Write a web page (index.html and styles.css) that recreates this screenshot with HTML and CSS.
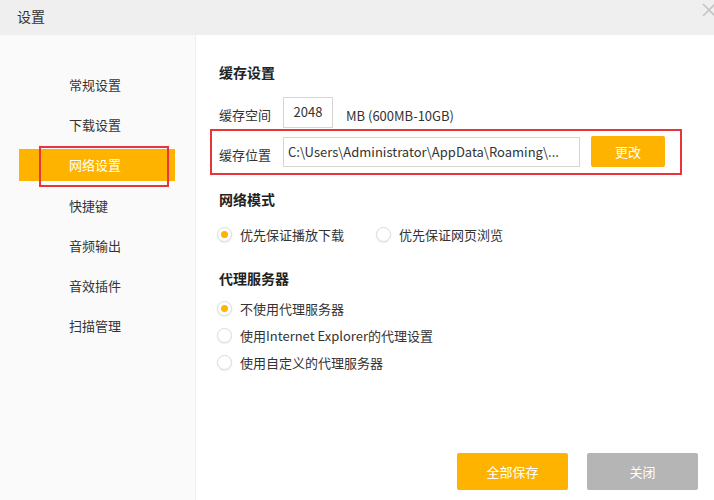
FILE: index.html
```html
<!DOCTYPE html>
<html lang="zh-CN">
<head>
    <meta charset="UTF-8">
    <title>设置</title>
    <link rel="stylesheet" href="styles.css">
</head>
<body>
    <div class="window">
        <div class="titlebar">
            <span class="title">设置</span>
            <svg class="close" width="14" height="14" viewBox="0 0 14 14">
                <path d="M1 1 L13 13 M13 1 L1 13" stroke="#c4c4c4" stroke-width="1.6" fill="none"/>
            </svg>
        </div>

        <div class="main">
            <div class="sidebar">
                <div class="nav-item"><span class="nav-label">常规设置</span></div>
                <div class="nav-item"><span class="nav-label">下载设置</span></div>
                <div class="nav-item active">
                    <span class="nav-label">网络设置</span>
                    <span class="mark mark-nav"></span>
                </div>
                <div class="nav-item"><span class="nav-label">快捷键</span></div>
                <div class="nav-item"><span class="nav-label">音频输出</span></div>
                <div class="nav-item"><span class="nav-label">音效插件</span></div>
                <div class="nav-item"><span class="nav-label">扫描管理</span></div>
            </div>

            <div class="panel">
                <h3 class="section-title">缓存设置</h3>

                <div class="field-row">
                    <span class="field-label">缓存空间</span>
                    <div class="input input-size">2048</div>
                    <span class="field-hint">MB (600MB-10GB)</span>
                </div>

                <div class="field-row field-marked">
                    <span class="field-label">缓存位置</span>
                    <div class="input input-path">C:\Users\Administrator\AppData\Roaming\...</div>
                    <button class="btn btn-orange btn-small">更改</button>
                </div>

                <h3 class="section-title mode-title">网络模式</h3>
                <div class="radio-line">
                    <label class="radio radio-first"><span class="dot checked"></span>优先保证播放下载</label>
                    <label class="radio"><span class="dot"></span>优先保证网页浏览</label>
                </div>

                <h3 class="section-title proxy-title">代理服务器</h3>
                <div class="radio-list">
                    <label class="radio"><span class="dot checked"></span>不使用代理服务器</label>
                    <label class="radio"><span class="dot"></span>使用Internet Explorer的代理设置</label>
                    <label class="radio"><span class="dot"></span>使用自定义的代理服务器</label>
                </div>

                <div class="footer">
                    <button class="btn btn-orange btn-big">全部保存</button>
                    <button class="btn btn-gray btn-big">关闭</button>
                </div>
            </div>
        </div>
    </div>
</body>
</html>
```

FILE: styles.css
```css
* {
    margin: 0;
    padding: 0;
    box-sizing: border-box;
}

body {
    font-family: "Noto Sans CJK SC", "Noto Sans", sans-serif;
    font-size: 13px;
    color: #333;
    background: #fff;
}

.window {
    width: 714px;
    height: 500px;
    display: flex;
    flex-direction: column;
    overflow: hidden;
}

.titlebar {
    height: 35px;
    background: #efefef;
    display: flex;
    justify-content: space-between;
    align-items: flex-start;
    padding-left: 17px;
    flex-shrink: 0;
}

.title {
    font-size: 14px;
    line-height: 33px;
    color: #333;
}

.close {
    margin-top: 3px;
    margin-right: -2px;
}

.main {
    flex: 1;
    display: flex;
}

/* sidebar */
.sidebar {
    width: 196px;
    background: #fafafa;
    border-right: 1px solid #eeeeee;
    padding-top: 30px;
}

.nav-item {
    position: relative;
    height: 40.3px;
    margin: 0 20px 0 19px;
    padding: 3px 0 5px;
}

.nav-label {
    display: flex;
    height: 100%;
    align-items: center;
    padding-left: 50px;
    color: #333;
}

.nav-item.active .nav-label {
    background: #fdb300;
    color: #fff;
}

.mark {
    position: absolute;
    border: 2px solid #e8353a;
    pointer-events: none;
}

.mark-nav {
    left: 20px;
    right: 6px;
    top: 0;
    bottom: -1px;
}

/* content */
.panel {
    flex: 1;
    display: flex;
    flex-direction: column;
    padding: 27px 16px 10px 23px;
}

.section-title {
    font-size: 14px;
    font-weight: bold;
    line-height: 20px;
    color: #222;
}

.mode-title {
    margin-top: 14px;
}

.proxy-title {
    margin-top: 24px;
}

.field-row {
    display: flex;
    align-items: center;
    margin-top: 15px;
}

.field-label {
    width: 64px;
    padding-top: 4px;
}

.field-hint {
    margin-left: 13px;
    padding-top: 5px;
}

.input {
    border: 1px solid #d6d6d6;
    background: #fff;
    line-height: 28px;
    color: #333;
    white-space: nowrap;
    overflow: hidden;
}

.input-size {
    width: 50px;
    height: 31px;
    text-align: center;
    line-height: 27px;
}

.input-path {
    width: 297px;
    height: 30px;
    padding-left: 4px;
}

.field-marked {
    margin-top: 1px;
    margin-left: -9px;
    width: 472px;
    border: 2px solid #e8353a;
    padding: 5px 15px 6px 7px;
}

.field-marked .field-label {
    padding-top: 6px;
}

.btn {
    border: none;
    border-radius: 2px;
    color: #fff;
    font-family: inherit;
    font-size: 13px;
    cursor: pointer;
}

.btn-orange {
    background: #fdb300;
}

.btn-gray {
    background: #b5b5b5;
}

.btn-small {
    width: 74px;
    height: 31px;
    margin-left: 11px;
}

.btn-big {
    width: 111px;
    height: 37px;
}

/* radios */
.radio-line {
    display: flex;
    margin-top: 15px;
}

.radio {
    display: flex;
    align-items: center;
    height: 20px;
    color: #333;
}

.radio-first {
    width: 159px;
}

.radio-list {
    display: flex;
    flex-direction: column;
    gap: 7px;
    margin-top: 10px;
}

.dot {
    width: 15px;
    height: 15px;
    border-radius: 50%;
    border: 1px solid #dcdcdc;
    background: #fff;
    box-shadow: 0 1px 2px rgba(0, 0, 0, 0.08);
    margin-right: 8px;
    margin-left: -2px;
    display: flex;
    align-items: center;
    justify-content: center;
    flex-shrink: 0;
}

.dot.checked::after {
    content: "";
    width: 7px;
    height: 7px;
    border-radius: 50%;
    background: #fdb300;
}

.footer {
    margin-top: auto;
    display: flex;
    justify-content: flex-end;
    gap: 19px;
}
```
